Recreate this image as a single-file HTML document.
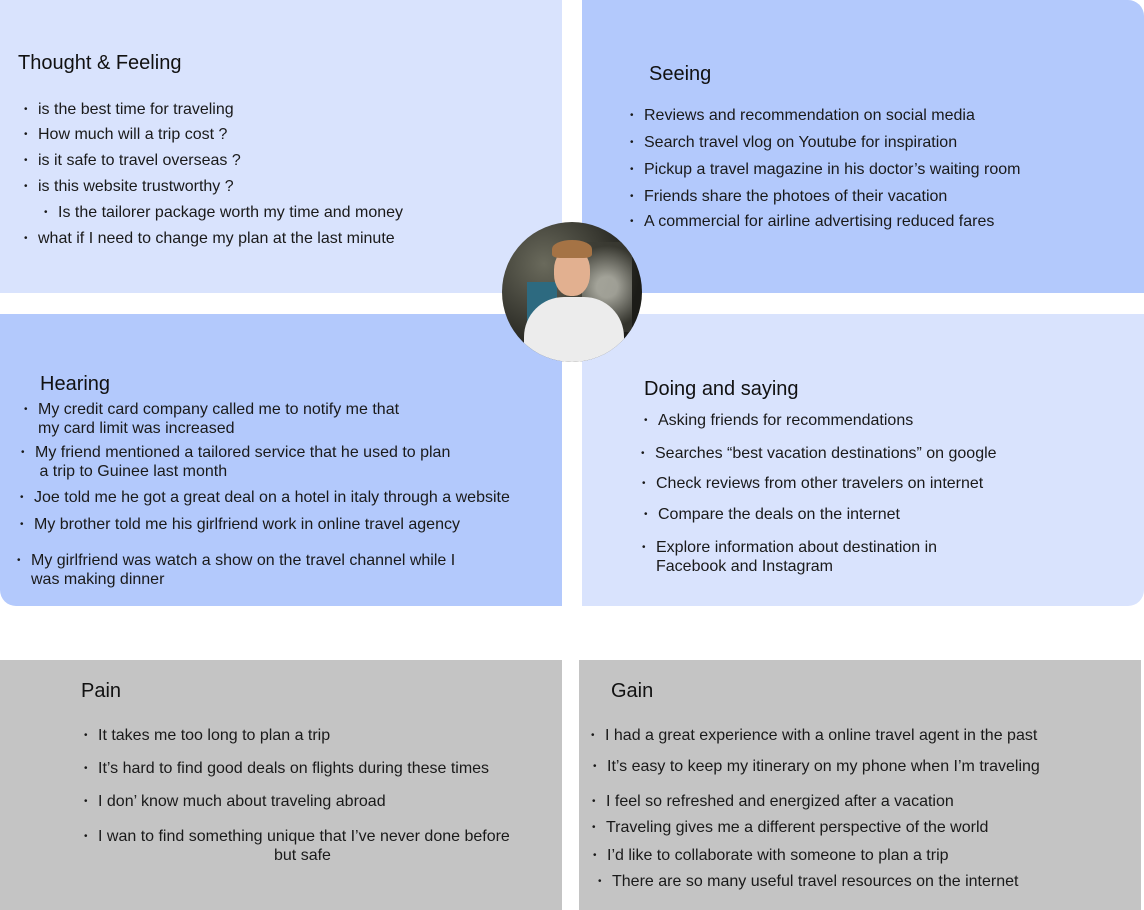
<!DOCTYPE html>
<html><head><style>
body{margin:0;width:1144px;height:910px;position:relative;background:#fff;font-family:"Liberation Sans",Arial,sans-serif;color:#1a1a1a;overflow:hidden}
.b{position:absolute}
.t{position:absolute;font-size:16px;line-height:19px;white-space:nowrap}
.h{position:absolute;font-size:20px;line-height:24px;white-space:nowrap;color:#111}
.d{position:absolute;font-size:10px;line-height:19px}
</style></head><body>
<div class="b" style="left:0;top:0;width:562px;height:293px;background:#d9e3fd"></div>
<div class="b" style="left:582px;top:0;width:562px;height:293px;background:#b3c9fc;border-top-right-radius:16px"></div>
<div class="b" style="left:0;top:314px;width:562px;height:292px;background:#b3c9fc;border-bottom-left-radius:16px"></div>
<div class="b" style="left:582px;top:314px;width:562px;height:292px;background:#d9e3fd;border-bottom-right-radius:16px"></div>
<div class="b" style="left:0;top:660px;width:562px;height:250px;background:#c4c4c4"></div>
<div class="b" style="left:579px;top:660px;width:562px;height:250px;background:#c4c4c4"></div>

<div class="b" style="left:502px;top:222px;width:140px;height:140px;border-radius:50%;overflow:hidden;background:radial-gradient(circle at 30% 30%,#6a6a5c,#1c1c18 70%)">
<div class="b" style="left:80px;top:20px;width:50px;height:90px;background:radial-gradient(circle,#cfcfc4 20%,#3c3c34 80%);opacity:.7"></div>
<div class="b" style="left:25px;top:60px;width:30px;height:70px;background:#2d6a80"></div>
<div class="b" style="left:22px;top:75px;width:100px;height:80px;border-radius:40px 40px 0 0;background:#ececec"></div>
<div class="b" style="left:52px;top:26px;width:36px;height:48px;border-radius:45%;background:#e2b090"></div>
<div class="b" style="left:50px;top:18px;width:40px;height:18px;border-radius:50% 50% 20% 20%;background:#a57345"></div>
</div>

<div class="h" style="left:18px;top:51px">Thought &amp; Feeling</div>
<div class="d" style="left:24px;top:100px">•</div><div class="t" style="left:38px;top:100px">is the best time for traveling</div>
<div class="d" style="left:24px;top:125px">•</div><div class="t" style="left:38px;top:125px">How much will a trip cost ?</div>
<div class="d" style="left:24px;top:151px">•</div><div class="t" style="left:38px;top:151px">is it safe to travel overseas ?</div>
<div class="d" style="left:24px;top:177px">•</div><div class="t" style="left:38px;top:177px">is this website trustworthy ?</div>
<div class="d" style="left:44px;top:203px">•</div><div class="t" style="left:58px;top:203px">Is the tailorer package worth my time and money</div>
<div class="d" style="left:24px;top:229px">•</div><div class="t" style="left:38px;top:229px">what if I need to change my plan at the last minute</div>

<div class="h" style="left:649px;top:62px">Seeing</div>
<div class="d" style="left:630px;top:106px">•</div><div class="t" style="left:644px;top:106px">Reviews and recommendation on social media</div>
<div class="d" style="left:630px;top:133px">•</div><div class="t" style="left:644px;top:133px">Search travel vlog on Youtube for inspiration</div>
<div class="d" style="left:630px;top:160px">•</div><div class="t" style="left:644px;top:160px">Pickup a travel magazine in his doctor’s waiting room</div>
<div class="d" style="left:630px;top:187px">•</div><div class="t" style="left:644px;top:187px">Friends share the photoes of their vacation</div>
<div class="d" style="left:630px;top:212px">•</div><div class="t" style="left:644px;top:212px">A commercial for airline advertising reduced fares</div>

<div class="h" style="left:40px;top:372px">Hearing</div>
<div class="d" style="left:24px;top:400px">•</div><div class="t" style="left:38px;top:400px">My credit card company called me to notify me that<br>my card limit was increased</div>
<div class="d" style="left:21px;top:443px">•</div><div class="t" style="left:35px;top:443px">My friend mentioned a tailored service that he used to plan<br>&nbsp;a trip to Guinee last month</div>
<div class="d" style="left:20px;top:488px">•</div><div class="t" style="left:34px;top:488px">Joe told me he got a great deal on a hotel in italy through a website</div>
<div class="d" style="left:20px;top:515px">•</div><div class="t" style="left:34px;top:515px">My brother told me his girlfriend work in online travel agency</div>
<div class="d" style="left:17px;top:551px">•</div><div class="t" style="left:31px;top:551px">My girlfriend was watch a show on the travel channel while I<br>was making dinner</div>

<div class="h" style="left:644px;top:377px">Doing and saying</div>
<div class="d" style="left:644px;top:411px">•</div><div class="t" style="left:658px;top:411px">Asking friends for recommendations</div>
<div class="d" style="left:641px;top:444px">•</div><div class="t" style="left:655px;top:444px">Searches “best vacation destinations” on google</div>
<div class="d" style="left:642px;top:474px">•</div><div class="t" style="left:656px;top:474px">Check reviews from other travelers on internet</div>
<div class="d" style="left:644px;top:505px">•</div><div class="t" style="left:658px;top:505px">Compare the deals on the internet</div>
<div class="d" style="left:642px;top:538px">•</div><div class="t" style="left:656px;top:538px">Explore information about destination in<br>Facebook and Instagram</div>

<div class="h" style="left:81px;top:679px">Pain</div>
<div class="d" style="left:84px;top:726px">•</div><div class="t" style="left:98px;top:726px">It takes me too long to plan a trip</div>
<div class="d" style="left:84px;top:759px">•</div><div class="t" style="left:98px;top:759px">It’s hard to find good deals on flights during these times</div>
<div class="d" style="left:84px;top:792px">•</div><div class="t" style="left:98px;top:792px">I don’ know much about traveling abroad</div>
<div class="d" style="left:84px;top:827px">•</div><div class="t" style="left:98px;top:827px">I wan to find something unique that I’ve never done before</div>
<div class="t" style="left:274px;top:846px">but safe</div>

<div class="h" style="left:611px;top:679px">Gain</div>
<div class="d" style="left:591px;top:726px">•</div><div class="t" style="left:605px;top:726px">I had a great experience with a online travel agent in the past</div>
<div class="d" style="left:593px;top:757px">•</div><div class="t" style="left:607px;top:757px">It’s easy to keep my itinerary on my phone when I’m traveling</div>
<div class="d" style="left:592px;top:792px">•</div><div class="t" style="left:606px;top:792px">I feel so refreshed and energized after a vacation</div>
<div class="d" style="left:592px;top:818px">•</div><div class="t" style="left:606px;top:818px">Traveling gives me a different perspective of the world</div>
<div class="d" style="left:593px;top:846px">•</div><div class="t" style="left:607px;top:846px">I’d like to collaborate with someone to plan a trip</div>
<div class="d" style="left:598px;top:872px">•</div><div class="t" style="left:612px;top:872px">There are so many useful travel resources on the internet</div>
</body></html>
